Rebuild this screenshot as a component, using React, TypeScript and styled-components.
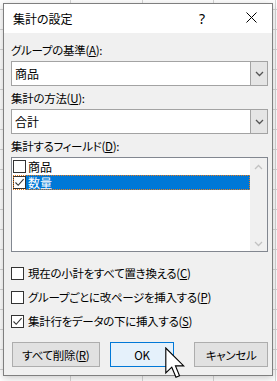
import React from "react"
import styled, { createGlobalStyle } from "styled-components"

const GlobalStyle = createGlobalStyle`
  html, body {
    margin: 0;
    padding: 0;
    background: #ffffff;
  }
  body {
    font-family: "Noto Sans CJK JP", "Noto Sans", sans-serif;
    font-size: 11.5px;
    letter-spacing: -0.3px;
    color: #000000;
    font-feature-settings: "palt";
  }
`;

// Excelのシートが後ろに見えている
const Sheet = styled.div`
  position: relative;
  width: 277px;
  height: 381px;
  box-sizing: border-box;
  padding: 3px 4px 5px 3px;
  overflow: hidden;
  background-color: #ffffff;
  background-image:
    linear-gradient(to right, transparent 70px, #d6d6d6 70px, #d6d6d6 71px, transparent 71px,
      transparent 142px, #d6d6d6 142px, #d6d6d6 143px, transparent 143px,
      transparent 213px, #d6d6d6 213px, #d6d6d6 214px, transparent 214px,
      transparent 275px, #d6d6d6 275px, #d6d6d6 276px, transparent 276px),
    linear-gradient(to bottom, transparent 19px, #d6d6d6 19px, #d6d6d6 20px, transparent 20px);
  background-size: 100% 100%, 100% 20px;
  background-position: 0 0, 0 10px;
`;

const Dialog = styled.div`
  width: 270px;
  height: 373px;
  box-sizing: border-box;
  border: 1px solid #7f7f7f;
  background: #f0f0f0;
  box-shadow: 0 2px 8px rgba(0, 0, 0, 0.22);
  display: flex;
  flex-direction: column;
`;

const TitleBar = styled.div`
  height: 29px;
  flex: none;
  background: #ffffff;
  display: flex;
  align-items: center;
  padding-left: 9px;
`;

const Title = styled.div`
  flex: 1;
  font-size: 12px;
  letter-spacing: 0;
  line-height: 16px;
  padding-top: 1px;
`;

const HelpMark = styled.div`
  width: 12px;
  text-align: center;
  font-family: "Noto Sans", sans-serif;
  font-size: 14px;
  letter-spacing: 0;
  margin-right: 33px;
`;

const CloseBox = styled.div`
  width: 20px;
  height: 20px;
  margin-right: 11px;
  margin-top: -3px;
  display: flex;
  align-items: center;
  justify-content: center;
`;

const Body = styled.div`
  flex: 1;
  display: flex;
  flex-direction: column;
  padding: 0 4px 0 7px;
`;

const Label = styled.div<{ $top: number }>`
  height: 16px;
  line-height: 16px;
  margin-top: ${(p) => p.$top}px;
  margin-bottom: 3px;
  white-space: nowrap;
`;

const Key = styled.span`
  text-decoration: underline;
  text-underline-offset: 1px;
`;

const Combo = styled.div`
  height: 25px;
  box-sizing: border-box;
  border: 1px solid #a3a3a3;
  background: #ffffff;
  display: flex;
  align-items: stretch;
`;

const ComboText = styled.div`
  flex: 1;
  padding-left: 3px;
  line-height: 23px;
  font-size: 12px;
  letter-spacing: 0;
`;

const ComboButton = styled.div`
  width: 16px;
  background: #e5e5e5;
  border-left: 1px solid #a3a3a3;
  display: flex;
  align-items: center;
  justify-content: center;
`;

const ListBox = styled.div`
  height: 95px;
  box-sizing: border-box;
  border: 1px solid #828790;
  background: #ffffff;
  display: flex;
`;

const ListItems = styled.div`
  flex: 1;
  padding: 1px 0 0 1px;
`;

const ListRow = styled.div<{ $focused?: boolean }>`
  height: 15px;
  display: flex;
  align-items: center;
  box-sizing: border-box;
  outline: ${(p) => (p.$focused ? "1px dotted #e87b1c" : "none")};
  outline-offset: -1px;
  margin-bottom: 1px;
`;

const ListText = styled.div<{ $selected?: boolean }>`
  flex: 1;
  height: 100%;
  line-height: 15px;
  padding-left: 2px;
  font-size: 12px;
  letter-spacing: 0;
  background: ${(p) => (p.$selected ? "#0078d7" : "transparent")};
  color: ${(p) => (p.$selected ? "#ffffff" : "#000000")};
`;

const ScrollBar = styled.div`
  width: 17px;
  background: #f0f0f0;
  display: flex;
  flex-direction: column;
  justify-content: space-between;
  align-items: center;
  padding: 6px 0 4px;
`;

const Box = styled.div`
  width: 13px;
  height: 13px;
  flex: none;
  box-sizing: border-box;
  border: 1px solid #333333;
  background: #ffffff;
  display: flex;
  align-items: center;
  justify-content: center;
`;

const CheckRow = styled.div<{ $top: number }>`
  height: 16px;
  display: flex;
  align-items: center;
  gap: 4px;
  margin-top: ${(p) => p.$top}px;
  white-space: nowrap;
`;

const ButtonRow = styled.div`
  display: flex;
  margin-top: 13px;
  padding-left: 1px;
`;

const Button = styled.div<{ $w: number; $gap: number; $default?: boolean }>`
  width: ${(p) => p.$w}px;
  height: 25px;
  margin-left: ${(p) => p.$gap}px;
  box-sizing: border-box;
  border: 1px solid ${(p) => (p.$default ? "#0078d7" : "#adadad")};
  background: ${(p) => (p.$default ? "#e5f1fb" : "#e1e1e1")};
  display: flex;
  align-items: center;
  justify-content: center;
  line-height: 16px;
`;

const Cursor = styled.svg`
  position: absolute;
  left: 165px;
  top: 347px;
`;

const Check = () => (
  <svg width="11" height="11" viewBox="0 0 11 11">
    <path d="M1.5 5.5 L4.2 8.3 L9.6 2.2" fill="none" stroke="#333333" strokeWidth="1.1" />
  </svg>
);

const Chevron = ({ up, color }: { up?: boolean; color: string }) => (
  <svg width="9" height="6" viewBox="0 0 9 6">
    <path d={up ? "M1 5 L4.5 1.5 L8 5" : "M1 1 L4.5 4.5 L8 1"} fill="none" stroke={color} strokeWidth="1.3" />
  </svg>
);

const CheckBox = ({ checked }: { checked?: boolean }) => <Box>{checked && <Check />}</Box>;

export default function App() {
  return (
    <>
      <GlobalStyle />
      <Sheet>
        <Dialog>
          <TitleBar>
            <Title>集計の設定</Title>
            <HelpMark>?</HelpMark>
            <CloseBox>
              <svg width="11" height="11" viewBox="0 0 11 11">
                <path d="M0.5 0.5 L10.5 10.5 M10.5 0.5 L0.5 10.5" stroke="#000" strokeWidth="1" />
              </svg>
            </CloseBox>
          </TitleBar>
          <Body>
            <Label $top={9}>
              グループの基準(<Key>A</Key>):
            </Label>
            <Combo>
              <ComboText>商品</ComboText>
              <ComboButton>
                <Chevron color="#555555" />
              </ComboButton>
            </Combo>

            <Label $top={4}>
              集計の方法(<Key>U</Key>):
            </Label>
            <Combo>
              <ComboText>合計</ComboText>
              <ComboButton>
                <Chevron color="#555555" />
              </ComboButton>
            </Combo>

            <Label $top={4}>
              集計するフィールド(<Key>D</Key>):
            </Label>
            <ListBox>
              <ListItems>
                <ListRow>
                  <CheckBox />
                  <ListText>商品</ListText>
                </ListRow>
                <ListRow $focused>
                  <CheckBox checked />
                  <ListText $selected>数量</ListText>
                </ListRow>
              </ListItems>
              <ScrollBar>
                <Chevron up color="#c2c2c2" />
                <Chevron color="#c2c2c2" />
              </ScrollBar>
            </ListBox>

            <CheckRow $top={13}>
              <CheckBox />
              <span>
                現在の小計をすべて置き換える(<Key>C</Key>)
              </span>
            </CheckRow>
            <CheckRow $top={8}>
              <CheckBox />
              <span>
                グループごとに改ページを挿入する(<Key>P</Key>)
              </span>
            </CheckRow>
            <CheckRow $top={8}>
              <CheckBox checked />
              <span>
                集計行をデータの下に挿入する(<Key>S</Key>)
              </span>
            </CheckRow>

            <ButtonRow>
              <Button $w={88} $gap={0}>
                すべて削除(<Key>R</Key>)
              </Button>
              <Button $w={65} $gap={10} $default>
                OK
              </Button>
              <Button $w={74} $gap={20}>
                キャンセル
              </Button>
            </ButtonRow>
          </Body>
        </Dialog>
        <Cursor width="20" height="32" viewBox="0 0 12.4 19.6">
          <path
            d="M0.5 0.5 L0.5 16 L4.2 12.4 L6.8 18.6 L9 17.7 L6.5 11.6 L11.6 11.6 Z"
            fill="#ffffff"
            stroke="#000000"
            strokeWidth="0.7"
            strokeLinejoin="miter"
          />
        </Cursor>
      </Sheet>
    </>
  );
}
